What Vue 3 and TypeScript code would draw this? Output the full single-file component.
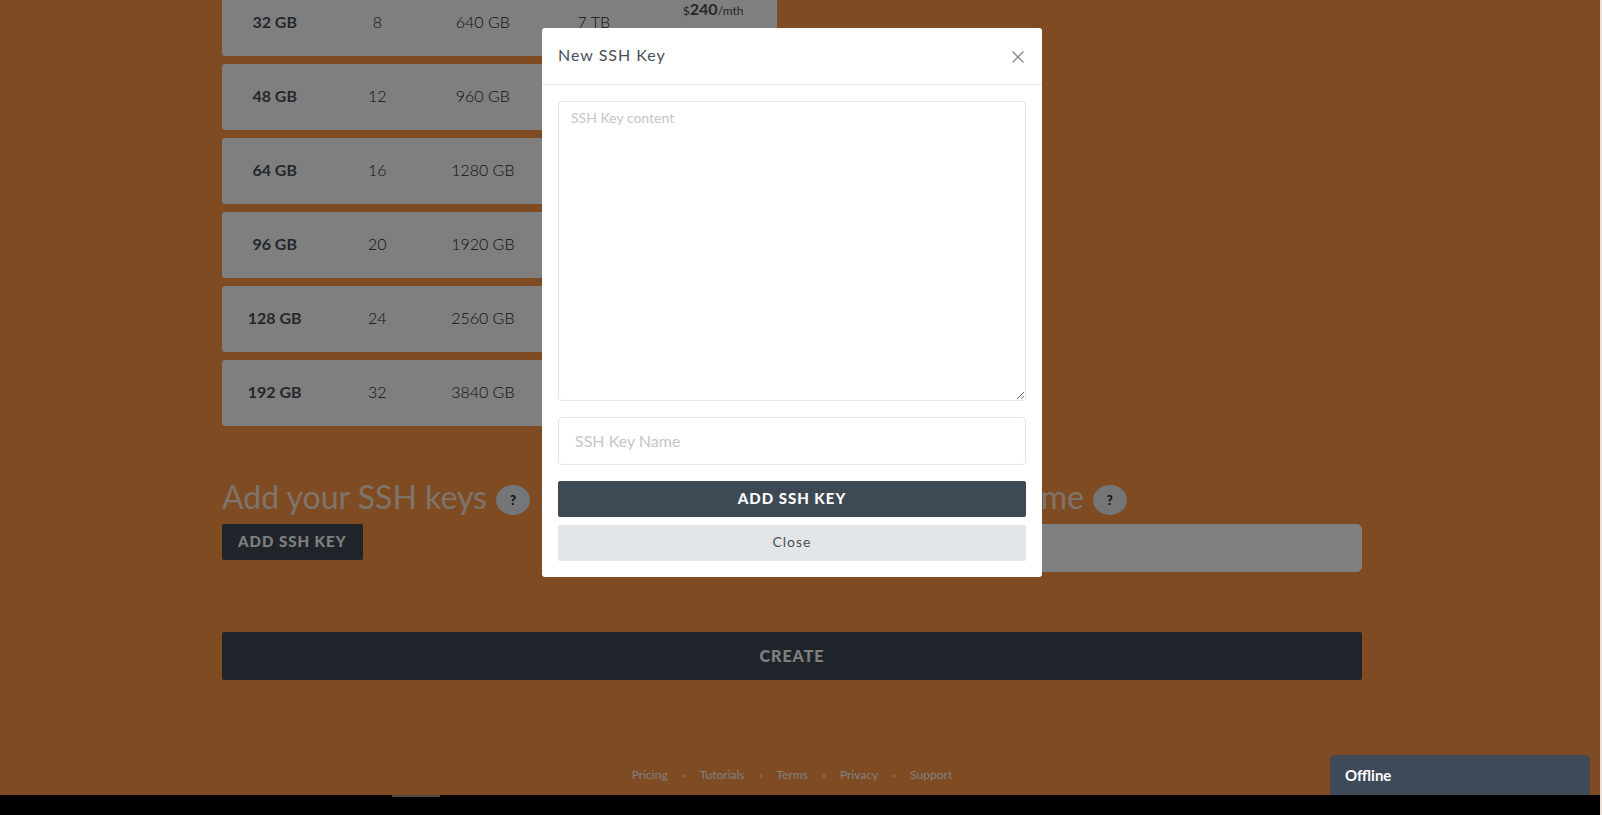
<script setup lang="ts">
import { ref } from 'vue'

interface Plan {
  memory: string
  cpus: number
  disk: string
  transfer?: string
  price?: number
}

const plans: Plan[] = [
  { memory: '32 GB', cpus: 8, disk: '640 GB', transfer: '7 TB', price: 240 },
  { memory: '48 GB', cpus: 12, disk: '960 GB' },
  { memory: '64 GB', cpus: 16, disk: '1280 GB' },
  { memory: '96 GB', cpus: 20, disk: '1920 GB' },
  { memory: '128 GB', cpus: 24, disk: '2560 GB' },
  { memory: '192 GB', cpus: 32, disk: '3840 GB' },
]
const links = ['Pricing', 'Tutorials', 'Terms', 'Privacy', 'Support']

const modalOpen = ref(true)
const keyContent = ref('')
const keyName = ref('')
const hostname = ref('')
</script>

<template>
  <div class="window">
    <div class="page">
      <main class="container">
        <table class="plans">
          <tbody>
            <tr v-for="plan in plans" :key="plan.memory">
              <th scope="row">{{ plan.memory }}</th>
              <td>{{ plan.cpus }}</td>
              <td>{{ plan.disk }}</td>
              <td>{{ plan.transfer }}</td>
              <td class="price">
                <template v-if="plan.price">$<b>{{ plan.price }}</b>/mth</template>
              </td>
            </tr>
          </tbody>
        </table>

        <div class="options">
          <section>
            <h2>Add your SSH keys <button class="help" type="button" aria-label="About SSH keys">?</button></h2>
            <button class="btn dark" type="button" @click="modalOpen = true">ADD SSH KEY</button>
          </section>
          <section>
            <h2><label for="hostname">Choose a hostname</label> <button class="help" type="button" aria-label="About the hostname">?</button></h2>
            <input id="hostname" v-model="hostname" class="field hostname" type="text">
          </section>
        </div>

        <button class="btn dark create" type="button">CREATE</button>
      </main>

      <footer>
        <ul>
          <li v-for="link in links" :key="link"><a href="#">{{ link }}</a></li>
        </ul>
      </footer>

      <div v-if="modalOpen" class="backdrop">
        <div class="modal" role="dialog" aria-modal="true" aria-labelledby="modal-title">
          <header>
            <h1 id="modal-title">New SSH Key</h1>
            <button class="dismiss" type="button" aria-label="Close dialog" @click="modalOpen = false">
              <svg width="12" height="12" viewBox="0 0 12 12" aria-hidden="true">
                <path d="M.5 .5 11.5 11.5M11.5 .5 .5 11.5" fill="none" stroke="#85898d" stroke-width="1.4" />
              </svg>
            </button>
          </header>
          <form @submit.prevent>
            <textarea v-model="keyContent" class="field" placeholder="SSH Key content" aria-label="SSH Key content" />
            <input v-model="keyName" class="field" type="text" placeholder="SSH Key Name" aria-label="SSH Key Name">
            <div class="actions">
              <button class="btn dark" type="submit">ADD SSH KEY</button>
              <button class="btn light" type="button" @click="modalOpen = false">Close</button>
            </div>
          </form>
        </div>
      </div>

      <button class="chat" type="button">Offline</button>
      <div class="status" />
    </div>
  </div>
</template>

<style>
body {
  margin: 0;
  background: #000;
}
</style>

<style scoped>
* {
  box-sizing: border-box;
}

.window {
  border-right: 2px solid #eee0d4;
  font-family: Lato, "Open Sans", sans-serif;
  font-size: 16px;
  line-height: 24px;
  color: #495057;
  min-height: 100vh;
}

.page {
  position: relative;
  display: flow-root;
  background: #fd9644;
}

.container {
  width: 100%;
  max-width: 1156px;
  margin: 0 auto;
  padding-right: 16px;
}

.plans {
  width: calc(50% - 15px);
  margin-top: -18px;
  table-layout: fixed;
  border-collapse: separate;
  border-spacing: 0 8px;
  text-align: center;
}

.plans th,
.plans td {
  height: 66px;
  padding: 0 0 2px;
  background: #fff;
  width: 20%;
  font-weight: 300;
  color: #212529;
}

.plans th {
  width: 19%;
  font-weight: 700;
  color: #495057;
  border-radius: 3px 0 0 3px;
}

.plans td:nth-child(2) {
  width: 18%;
}

.plans .price {
  width: 23%;
  padding-top: 7px;
  vertical-align: top;
  font-size: 12px;
  font-weight: 400;
  color: #495057;
  border-radius: 0 3px 3px 0;
}

.price b {
  font-size: 16px;
  font-weight: 700;
}

.options {
  display: grid;
  grid-template-columns: 1fr 1fr;
  gap: 30px;
  margin-top: 44px;
}

h2 {
  display: flex;
  align-items: center;
  gap: 9px;
  height: 38px;
  margin: 0 0 8px;
  font-size: 32px;
  font-weight: 400;
  line-height: 38px;
  color: rgba(255, 255, 255, .8);
}

button {
  font-family: inherit;
  cursor: pointer;
}

.help {
  width: 34px;
  height: 30px;
  margin-top: 5px;
  padding: 0;
  border: 0;
  border-radius: 50%;
  background: #e9ecef;
  color: #212529;
  font-size: 13px;
  font-weight: 900;
}

.btn {
  height: 36px;
  padding: 0 16px 2px;
  border: 0;
  border-radius: 2px;
  font-size: 15px;
  line-height: 24px;
  letter-spacing: 1px;
}

.dark {
  background: #3e4956;
  color: #fff;
  font-weight: 900;
}

.light {
  background: #e2e6e9;
  color: #495057;
  font-size: 14px;
}

.field {
  display: block;
  width: 100%;
  height: 48px;
  padding: 0 16px 2px;
  border: 1px solid #e2e5e9;
  border-radius: 4px;
  background: #fff;
  font: 16px/24px Lato, "Open Sans", sans-serif;
  color: #495057;
}

.field::placeholder {
  color: #c3c6ca;
  opacity: 1;
}

.hostname {
  border-color: #fff;
  border-radius: 5px;
}

.create {
  display: block;
  width: 100%;
  height: 48px;
  padding-bottom: 0;
  margin-top: 60px;
  font-size: 16px;
}

footer {
  padding: 85px 0 10px;
  color: #fff;
  font-size: 12px;
  line-height: 20px;
}

footer ul {
  display: flex;
  justify-content: center;
  margin: 0;
  padding: 0 16px 0 0;
  list-style: none;
}

footer li {
  display: flex;
  align-items: center;
}

footer li + li::before {
  width: 4px;
  height: 4px;
  margin: 2px 14px 0;
  border-radius: 50%;
  background: #fff;
  opacity: .45;
  content: "";
}

footer a {
  color: inherit;
  text-decoration: none;
}

.backdrop {
  position: absolute;
  inset: 0;
  padding: 28px 16px 0 0;
  background: rgba(0, 0, 0, .5);
}

.modal {
  width: 500px;
  max-width: 100%;
  margin: 0 auto;
  border-radius: 3px;
  background: #fff;
}

.modal header {
  display: flex;
  align-items: center;
  justify-content: space-between;
  height: 57px;
  padding: 0 16px;
  border-bottom: 1px solid #e9ecef;
}

.modal h1 {
  margin: 0;
  padding-bottom: 2px;
  font-size: 16px;
  font-weight: 400;
  letter-spacing: 1px;
}

.dismiss {
  display: flex;
  padding: 4px 2px 2px;
  border: 0;
  background: none;
}

form {
  display: grid;
  gap: 16px;
  padding: 16px;
}

textarea.field {
  height: 300px;
  padding: 4px 12px;
  font-size: 14px;
  resize: vertical;
}

.actions {
  display: grid;
  gap: 8px;
}

.chat {
  position: absolute;
  right: 10px;
  bottom: 0;
  width: 260px;
  height: 40px;
  padding: 0 15px;
  border: 0;
  border-radius: 5px 5px 0 0;
  background: #3e4a57;
  color: #fff;
  font-size: 15px;
  font-weight: 700;
  text-align: left;
}

.status {
  position: absolute;
  bottom: -2px;
  left: 392px;
  width: 48px;
  height: 2px;
  background: #514840;
}
</style>
